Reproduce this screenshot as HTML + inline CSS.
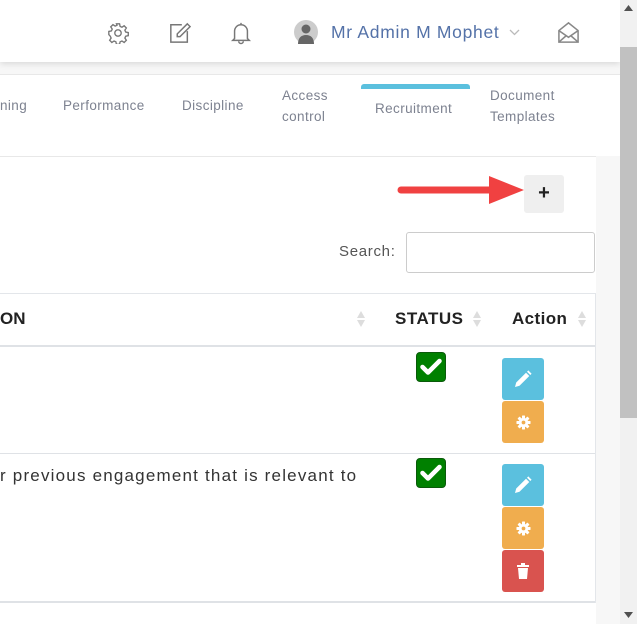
<!DOCTYPE html>
<html><head><meta charset="utf-8"><style>
*{margin:0;padding:0;box-sizing:border-box}
body{width:637px;height:624px;overflow:hidden;background:#f7f7f7;font-family:"Liberation Sans",Arial,sans-serif;position:relative}
.a{position:absolute}
.hdr{left:0;top:0;width:620px;height:62px;background:#fff;box-shadow:0 2px 6px rgba(0,0,0,.12)}
.tabs{left:0;top:74px;width:620px;height:82px;background:#fff;border-top:1px solid #e8e8e8}
.tab{position:absolute;color:#7d8290;font-size:13.5px;line-height:21px;letter-spacing:.4px}
.panel{left:0;top:156px;width:596px;height:468px;background:#fff;border-top:1px solid #e8e8e8}
.sb{left:620px;top:0;width:17px;height:624px;background:#f1f1f1}
.btn{position:absolute;left:502px;width:42px;height:42px;border-radius:3px;display:flex;align-items:center;justify-content:center}
.chk{position:absolute;left:416px;width:30px;height:30px;background:#008000;border-radius:4px;border:1px solid #0a5a0a;display:flex;align-items:center;justify-content:center}
</style></head><body>
<div class="a hdr">
 <svg class="a" style="left:107px;top:22px" width="22" height="22" viewBox="0 0 24 24" fill="none" stroke="#777" stroke-width="1.5"><circle cx="12" cy="12" r="3.5"/><path d="M10.3 2h3.4l.6 2.8 2 .9 2.4-1.6 2.4 2.4-1.6 2.4.9 2 2.8.6v3.4l-2.8.6-.9 2 1.6 2.4-2.4 2.4-2.4-1.6-2 .9-.6 2.8h-3.4l-.6-2.8-2-.9-2.4 1.6-2.4-2.4 1.6-2.4-.9-2L2 13.7v-3.4l2.8-.6.9-2-1.6-2.4 2.4-2.4 2.4 1.6 2-.9z"/></svg>
 <svg class="a" style="left:169px;top:22px" width="22" height="22" viewBox="0 0 24 24" fill="none" stroke="#777" stroke-width="1.6"><path d="M14 3H2v19h18V10"/><path d="M20 2l3 3-11 11H9v-3z"/></svg>
 <svg class="a" style="left:230px;top:21px" width="22" height="24" viewBox="0 0 24 26" fill="none" stroke="#777" stroke-width="1.6"><path d="M12 2v2M5 19V11a7 7 0 0 1 14 0v8l2 2H3z"/><path d="M9.5 22a2.5 2.5 0 0 0 5 0"/></svg>
 <svg class="a" style="left:294px;top:20px" width="24" height="24" viewBox="0 0 24 24"><circle cx="12" cy="12" r="12" fill="#ccc"/><circle cx="12" cy="9" r="4.5" fill="#666"/><path d="M4 24c0-6 3-9 8-9s8 3 8 9z" fill="#666"/></svg>
 <div class="a" style="left:331px;top:22px;font-size:17.5px;color:#5472a8;letter-spacing:.7px">Mr Admin M Mophet</div>
 <svg class="a" style="left:509px;top:29px" width="11" height="7" viewBox="0 0 11 7" fill="none" stroke="#bbb" stroke-width="1.3"><path d="M1 1l4.5 4.5L10 1"/></svg>
 <svg class="a" style="left:557px;top:21px" width="23" height="23" viewBox="0 0 24 24" fill="none" stroke="#888" stroke-width="1.6"><path d="M2 10l10-8 10 8v12H2z"/><path d="M2 10l10 7 10-7M2 22l8-7M22 22l-8-7"/></svg>
</div>
<div class="a tabs">
 <div class="tab" style="left:0;top:20px">ning</div>
 <div class="tab" style="left:63px;top:20px">Performance</div>
 <div class="tab" style="left:182px;top:20px">Discipline</div>
 <div class="tab" style="left:282px;top:10px">Access<br>control</div>
 <div class="a" style="left:361px;top:9px;width:109px;height:5px;background:#5bc0de;border-radius:3px 3px 0 0"></div>
 <div class="tab" style="left:375px;top:23px">Recruitment</div>
 <div class="tab" style="left:490px;top:10px">Document<br>Templates</div>
</div>
<div class="a panel"></div>
<div class="a" style="left:524px;top:175px;width:40px;height:38px;background:#efefef;border-radius:3px;font-weight:bold;font-size:20px;text-align:center;line-height:36px;color:#222">+</div>
<svg class="a" style="left:396px;top:172px" width="130" height="36" viewBox="0 0 130 36"><path d="M5 18H95" stroke="#f04141" stroke-width="7" stroke-linecap="round"/><path d="M93 4L128 18 93 32z" fill="#f04141"/></svg>
<div class="a" style="left:339px;top:243px;font-size:15px;color:#555;letter-spacing:.7px">Search:</div>
<div class="a" style="left:406px;top:232px;width:189px;height:41px;border:1px solid #ccc;border-radius:3px;background:#fff"></div>
<div class="a" style="left:0;top:293px;width:596px;height:1px;background:#e3e6ea"></div>
<div class="a" style="left:0;top:309px;font-size:17px;font-weight:bold;color:#222">ON</div>
<div class="a" style="left:395px;top:309px;font-size:17px;font-weight:bold;color:#222;letter-spacing:.5px">STATUS</div>
<div class="a" style="left:512px;top:309px;font-size:17px;font-weight:bold;color:#222;letter-spacing:.4px">Action</div>
<svg class="a" style="left:356px;top:310px" width="10" height="18" viewBox="0 0 10 18" fill="#ddd"><path d="M5 1l4 7H1zM5 17l4-7H1z"/></svg>
<svg class="a" style="left:472px;top:310px" width="10" height="18" viewBox="0 0 10 18" fill="#ddd"><path d="M5 1l4 7H1zM5 17l4-7H1z"/></svg>
<svg class="a" style="left:577px;top:310px" width="10" height="18" viewBox="0 0 10 18" fill="#ddd"><path d="M5 1l4 7H1zM5 17l4-7H1z"/></svg>
<div class="a" style="left:0;top:345px;width:596px;height:2px;background:#dfe2e6"></div>
<div class="a" style="left:0;top:453px;width:596px;height:1px;background:#dfe2e6"></div>
<div class="a" style="left:0;top:601px;width:596px;height:2px;background:#dfe2e6"></div>
<div class="a" style="left:595px;top:293px;width:1px;height:310px;background:#e3e6ea"></div>
<div class="a" style="left:0;top:466px;font-size:17px;color:#333;letter-spacing:1.2px">r previous engagement that is relevant to</div>
<div class="chk" style="top:352px"><svg width="22" height="18" viewBox="0 0 22 18"><path d="M2.5 9l5.5 5.5L19.5 3" fill="none" stroke="#fff" stroke-width="4.5" stroke-linecap="round" stroke-linejoin="round"/></svg></div>
<div class="chk" style="top:458px"><svg width="22" height="18" viewBox="0 0 22 18"><path d="M2.5 9l5.5 5.5L19.5 3" fill="none" stroke="#fff" stroke-width="4.5" stroke-linecap="round" stroke-linejoin="round"/></svg></div>
<div class="btn" style="top:358px;background:#5bc0de"><svg width="18" height="18" viewBox="0 0 18 18" fill="#fff"><path d="M1 17l1.2-4.5L12 2.7l3.3 3.3-9.8 9.8z M13 1.7l1.3-1.3 3.3 3.3-1.3 1.3z"/></svg></div>
<div class="btn" style="top:401px;background:#f0ad4e"><svg width="15" height="15" viewBox="-8 -8 16 16"><g fill="#fff"><rect x="-1.6" y="-7.5" width="3.2" height="15" rx=".6"/><rect x="-1.6" y="-7.5" width="3.2" height="15" rx=".6" transform="rotate(45)"/><rect x="-1.6" y="-7.5" width="3.2" height="15" rx=".6" transform="rotate(90)"/><rect x="-1.6" y="-7.5" width="3.2" height="15" rx=".6" transform="rotate(135)"/><circle r="5"/></g><circle r="2" fill="#f0ad4e"/></svg></div>
<div class="btn" style="top:464px;background:#5bc0de"><svg width="18" height="18" viewBox="0 0 18 18" fill="#fff"><path d="M1 17l1.2-4.5L12 2.7l3.3 3.3-9.8 9.8z M13 1.7l1.3-1.3 3.3 3.3-1.3 1.3z"/></svg></div>
<div class="btn" style="top:507px;background:#f0ad4e"><svg width="15" height="15" viewBox="-8 -8 16 16"><g fill="#fff"><rect x="-1.6" y="-7.5" width="3.2" height="15" rx=".6"/><rect x="-1.6" y="-7.5" width="3.2" height="15" rx=".6" transform="rotate(45)"/><rect x="-1.6" y="-7.5" width="3.2" height="15" rx=".6" transform="rotate(90)"/><rect x="-1.6" y="-7.5" width="3.2" height="15" rx=".6" transform="rotate(135)"/><circle r="5"/></g><circle r="2" fill="#f0ad4e"/></svg></div>
<div class="btn" style="top:550px;background:#d9534f"><svg width="14" height="16" viewBox="0 0 14 16" fill="#fff"><path d="M1 2h12v2H1zM5 0h4v2H5zM2 5h10l-1 11H3z"/></svg></div>
<div class="a sb">
 <div class="a" style="left:0;top:47px;width:17px;height:371px;background:#c1c1c1"></div>
 <svg class="a" style="left:4px;top:5px" width="9" height="6" viewBox="0 0 9 6"><path d="M4.5 0L9 6H0z" fill="#505050"/></svg>
 <svg class="a" style="left:4px;top:612px" width="9" height="6" viewBox="0 0 9 6"><path d="M4.5 6L9 0H0z" fill="#505050"/></svg>
</div>
</body></html>
